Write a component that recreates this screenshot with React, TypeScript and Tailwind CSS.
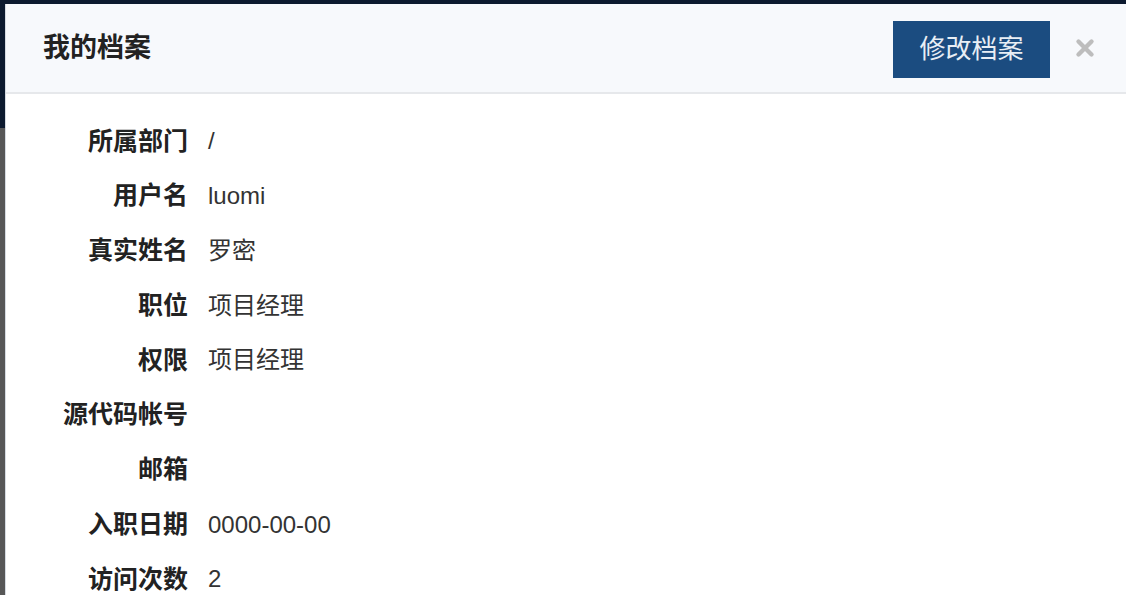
import { X } from 'lucide-react';

const rows: [string, string][] = [
  ['所属部门', '/'],
  ['用户名', 'luomi'],
  ['真实姓名', '罗密'],
  ['职位', '项目经理'],
  ['权限', '项目经理'],
  ['源代码帐号', ''],
  ['邮箱', ''],
  ['入职日期', '0000-00-00'],
  ['访问次数', '2'],
];

export default function App() {
  return (
    <div
      className="relative h-[595px] w-[1126px] overflow-hidden bg-[#575757]"
      style={{ fontFamily: '"Liberation Sans", "Noto Sans CJK SC", sans-serif' }}
    >
      {/* page behind the overlay */}
      <div className="h-[128px] bg-[#0c1a2f]" />

      {/* modal */}
      <div className="absolute left-[5px] top-[4px] right-0 bottom-0 border-l border-[#d6dbe2] bg-white">
        <div className="flex h-[90px] items-center justify-between border-b-2 border-[#e6e8eb] bg-[#f7f9fc] pl-[37px] pr-[28px]">
          <h2 className="text-[27px] font-bold text-[#222]">我的档案</h2>
          <div className="flex items-center gap-[22px]">
            <button className="mt-[2px] h-[57px] w-[157px] bg-[#1b4c80] text-[26px] text-[#e8eef5]">修改档案</button>
            <X className="h-[26px] w-[26px] text-[#bdbdbd]" strokeWidth={4} />
          </div>
        </div>

        <div className="pt-[20px]">
          {rows.map(([label, value]) => (
            <div key={label} className="flex h-[54.75px] items-center text-[24px] text-[#333]">
              <div className="w-[182px] text-right text-[25px] font-bold text-[#222]">{label}</div>
              <div className="pl-[20px]">{value}</div>
            </div>
          ))}
        </div>
      </div>
    </div>
  );
}
